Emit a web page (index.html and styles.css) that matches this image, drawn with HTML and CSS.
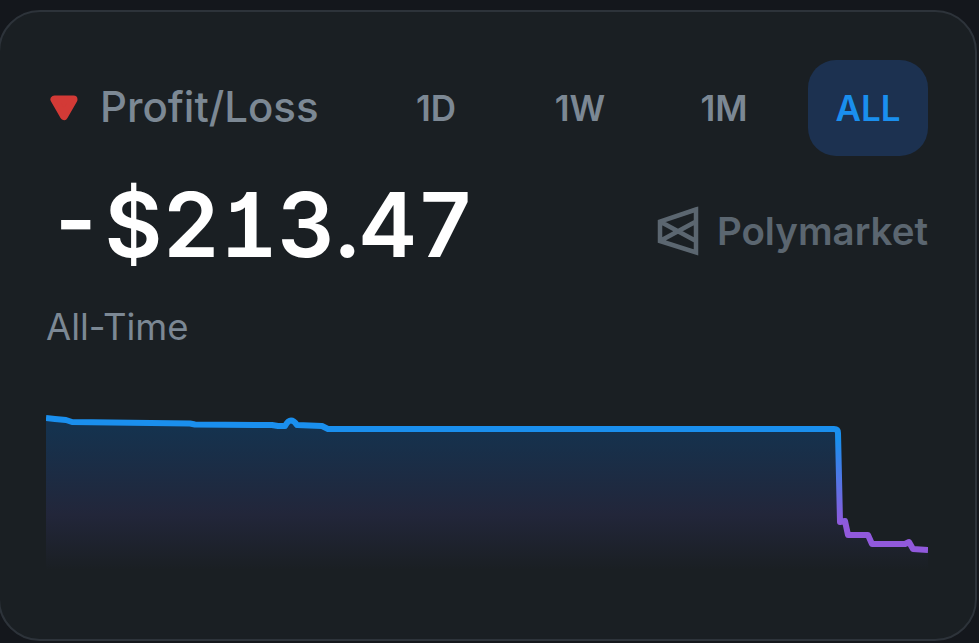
FILE: index.html

```html
<!DOCTYPE html>
<html lang="en">
<head>
    <meta charset="UTF-8">
    <title>Profit/Loss</title>
    <link rel="stylesheet" href="styles.css">
</head>
<body>
<div class="card">
    <div class="header">
        <div class="title">
            <svg class="arrow" width="30" height="26" viewBox="0 0 30 26">
                <path d="M5.5 4.5 H24.5 L15 21 Z" fill="#d33a36" stroke="#d33a36" stroke-width="8" stroke-linejoin="round"/>
            </svg>
            <span>Profit/Loss</span>
        </div>
        <div class="tabs">
            <span class="tab">1D</span>
            <span class="tab">1W</span>
            <span class="tab">1M</span>
            <span class="tab active">ALL</span>
        </div>
    </div>
    <div class="summary">
        <div class="amount">-$213.47</div>
        <div class="brand">
            <svg width="42" height="50" viewBox="0 0 42 50">
                <path d="M39 3.5 L3 15.5 V35 L39 46.5 Z M3 15.5 L39 35 M3 35 L39 15.5" fill="none" stroke="#5b6670" stroke-width="4.5" stroke-linejoin="miter"/>
            </svg>
            <span>Polymarket</span>
        </div>
    </div>
    <div class="period">All-Time</div>
    <svg class="chart" width="882" height="170" viewBox="46 400 882 170">
        <defs>
            <linearGradient id="areaFill" gradientUnits="userSpaceOnUse" x1="0" y1="430" x2="0" y2="570">
                <stop offset="0" stop-color="#15324e"/>
                <stop offset="0.6" stop-color="#22263a"/>
                <stop offset="1" stop-color="#22263a" stop-opacity="0"/>
            </linearGradient>
            <linearGradient id="lineStroke" gradientUnits="userSpaceOnUse" x1="0" y1="440" x2="0" y2="525">
                <stop offset="0" stop-color="#1a8fee"/>
                <stop offset="1" stop-color="#9159dc"/>
            </linearGradient>
        </defs>
        <path d="M46 418 L55 419 L66 420 L72 422 L190 423.5 L195 424.5 L272 425 L278 426 L285 426 Q288 420.5 291 420.5 Q294 420.5 297 425 L322 426 L328 429 L834 429 Q838 429 838 433 L840 522 L845 521 L848 535 L868 535 L872 544 L905 544 L909 542 L913 549 L928 550 V570 H46 Z" fill="url(#areaFill)"/>
        <path d="M46 418 L55 419 L66 420 L72 422 L190 423.5 L195 424.5 L272 425 L278 426 L285 426 Q288 420.5 291 420.5 Q294 420.5 297 425 L322 426 L328 429 L834 429 Q838 429 838 433 L840 522 L845 521 L848 535 L868 535 L872 544 L905 544 L909 542 L913 549 L928 550" fill="none" stroke="url(#lineStroke)" stroke-width="6" stroke-linejoin="round"/>
    </svg>
</div>
</body>
</html>
```

FILE: styles.css

```css
html, body {
    height: 100%;
}
body {
    font-family: Inter, "Liberation Sans", sans-serif;
    background-color: #14171c;
    margin: 0;
    overflow: hidden;
}
.card {
    box-sizing: border-box;
    height: 631px;
    margin: 10px 2px 0 -2px;
    padding: 48px 47px 0 46px;
    background-color: #1a1f23;
    border: 2px solid #2d333a;
    border-radius: 42px;
}
.header {
    display: flex;
    justify-content: space-between;
    align-items: center;
}
.title {
    display: flex;
    align-items: center;
    gap: 21px;
    padding-bottom: 3px;
    font-size: 42px;
    font-weight: 500;
    color: #7c8894;
}
.arrow {
    margin-left: 3px;
    margin-top: 3px;
}
.tabs {
    display: flex;
    gap: 24px;
}
.tab {
    width: 120px;
    height: 96px;
    display: flex;
    align-items: center;
    justify-content: center;
    border-radius: 28px;
    font-size: 35px;
    font-weight: 600;
    color: #7c8894;
}
.tab.active {
    background-color: #1c3150;
    color: #1a8fee;
}
.summary {
    display: flex;
    justify-content: space-between;
    align-items: center;
    margin-top: 14px;
}
.amount {
    margin-left: 1px;
    font-size: 89px;
    font-weight: 600;
    line-height: 110px;
    color: #fff;
    font-feature-settings: "tnum", "cv01";
}
.brand {
    display: flex;
    align-items: center;
    gap: 18px;
    margin-top: 12px;
    font-size: 38.5px;
    font-weight: 600;
    color: #5b6670;
}
.period {
    margin-top: 25px;
    font-size: 36.5px;
    color: #7c8894;
}
.chart {
    display: block;
    margin-top: 51px;
}
```
